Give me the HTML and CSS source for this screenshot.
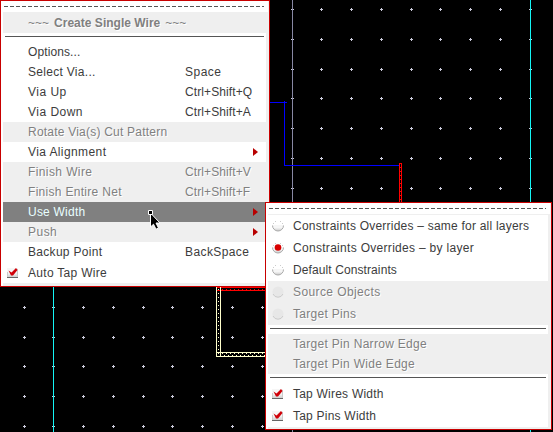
FILE: index.html
```html
<!DOCTYPE html>
<html lang="en">
<head>
<meta charset="utf-8">
<title>Create Single Wire</title>
<link rel="stylesheet" href="styles.css">
</head>
<body>
<svg class="canvas" width="553" height="432" shape-rendering="crispEdges" aria-hidden="true">
  <g id="grid"></g>
  <path d="M292.5 0V432" stroke="#8888a4"/>
  <path d="M530.5 0V432M53.5 287V432" stroke="#14f5f5"/>
  <path d="M270 102.5H287M284.5 101V165.5H399" stroke="#00f" fill="none"/>
  <path d="M399.5 202V163.5H401.5V202" stroke="red" fill="none"/>
  <path d="M400.5 163V202" stroke="red" stroke-dasharray="1 3"/>
  <path d="M217 287.5H265M217 290.5H265" stroke="red"/>
  <path d="M222 289.5H265" stroke="red" stroke-dasharray="1 3"/>
  <path d="M216.5 287V356.5H265M220.5 287V356M216 352.5H265" stroke="#ffc" fill="none"/>
  <path d="M218.5 289V356M222 353.5H265M224 355.5H265" stroke="#ffc" stroke-dasharray="1 3"/>
</svg>

<svg width="0" height="0" class="defs">
  <linearGradient id="shade" x2="0" y2="1"><stop offset=".45" stop-color="#f6f6f6"/><stop offset="1" stop-color="#c8c8c8"/></linearGradient>
  <symbol id="arrow" viewBox="0 0 5 8"><path d="M0 0L5 4L0 8Z" fill="#b80000"/></symbol>
  <symbol id="check" viewBox="0 0 12 12">
    <rect x="0" y="1" width="11" height="10" fill="url(#shade)"/>
    <path d="M0 10.5H11" stroke="#666"/><path d="M10.5 2V10M.5 5V10" stroke="#ccc"/>
    <path d="M1.500 3.500L4.500 5.500L9 1L10.500 3L6 8.500H4Z" fill="#d00008"/>
  </symbol>
  <symbol id="radio" viewBox="0 0 12 12">
    <path d="M.5 5A5.5 6 0 0 0 11.5 5Z" fill="url(#shade)"/>
    <path d="M.5 5.5A5.5 5.5 0 0 0 11.5 5.5" fill="none" stroke="#aaa"/>
    <path d="M3 1.5H4M8 1.5H9M1 3.5H2M10 3.5H11" stroke="#ccc"/>
  </symbol>
  <symbol id="radio-off" viewBox="0 0 12 12"><circle cx="6" cy="6" r="5.5" fill="#e7e7e7"/><path d="M1 8A5.5 5.5 0 0 0 11 8" fill="none" stroke="#ccc"/></symbol>
</svg>

<nav class="menu main">
  <div class="tear"></div>
  <div class="row title off"><span class="tilde">~~~</span><span class="s0">Create Single Wire</span><span class="tilde">~~~</span></div>
  <div class="sep"></div>
  <div class="row"><span class="s1">Options...</span></div>
  <div class="row"><span class="s3">Select Via...</span><span class="key">Space</span></div>
  <div class="row"><span>Via Up</span><span class="key s1">Ctrl+Shift+Q</span></div>
  <div class="row"><span>Via Down</span><span class="key s1">Ctrl+Shift+A</span></div>
  <div class="row off"><span class="s2">Rotate Via(s) Cut Pattern</span></div>
  <div class="row"><span class="s4">Via Alignment</span><svg class="more"><use href="#arrow"/></svg></div>
  <div class="row off"><span class="s4">Finish Wire</span><span class="key s1">Ctrl+Shift+V</span></div>
  <div class="row off"><span class="s3">Finish Entire Net</span><span class="key s1">Ctrl+Shift+F</span></div>
  <div class="row active"><span class="s2">Use Width</span><svg class="more"><use href="#arrow"/></svg></div>
  <div class="row off"><span>Push</span><svg class="more"><use href="#arrow"/></svg></div>
  <div class="row"><span class="s3">Backup Point</span><span class="key s4">BackSpace</span></div>
  <div class="row tall"><svg class="mark"><use href="#check"/></svg><span class="s3">Auto Tap Wire</span></div>
</nav>

<nav class="menu sub">
  <div class="tear"></div>
  <div class="row tall"><svg class="mark"><use href="#radio"/></svg><span class="s2">Constraints Overrides – same for all layers</span></div>
  <div class="row tall"><svg class="mark"><use href="#radio"/><circle cx="6" cy="5.5" r="3.3" fill="#d80000"/></svg><span class="s3">Constraints Overrides – by layer</span></div>
  <div class="row tall"><svg class="mark"><use href="#radio"/></svg><span class="s1">Default Constraints</span></div>
  <div class="row tall off"><svg class="mark"><use href="#radio-off"/></svg><span class="s4">Source Objects</span></div>
  <div class="row tall off"><svg class="mark"><use href="#radio-off"/></svg><span class="s3">Target Pins</span></div>
  <div class="sep"></div>
  <div class="row off"><span class="s3">Target Pin Narrow Edge</span></div>
  <div class="row off"><span class="s3">Target Pin Wide Edge</span></div>
  <div class="sep"></div>
  <div class="row tall"><svg class="mark"><use href="#check"/></svg><span class="s2">Tap Wires Width</span></div>
  <div class="row tall"><svg class="mark"><use href="#check"/></svg><span class="s2">Tap Pins Width</span></div>
</nav>

<svg class="cursor" width="14" height="20" viewBox="0 0 14 20">
  <path d="M2.5 3V17L5.5 14.2L8 19.2L10.5 18L8 13H12Z" fill="#000" stroke="#fff"/>
  <path d="M.5 .5H4.500V4.500H.5Z" fill="#000" stroke="#fff"/>
</svg>
<script src="grid.js"></script>
</body>
</html>
```
FILE: styles.css
```css
body { margin: 0; width: 553px; height: 432px; overflow: hidden; background: #000; position: relative; font: 12px/20px "Liberation Sans", Arial, sans-serif; letter-spacing: .48px; color: #3c3c3c; }
.canvas { display: block; }
.defs { position: absolute; }
.menu { position: absolute; box-sizing: border-box; border: 1px solid #c80000; background: #efefef; padding: 0 3px 2px 2px; white-space: nowrap; box-shadow: inset 2px 0 #fff; }
.main { left: 0; top: 0; width: 270px; height: 287px; }
.sub { left: 265px; top: 202px; width: 287px; height: 228px; }
.tear { height: 11px; margin-right: -2px; background: repeating-linear-gradient(90deg, #555 0 4px, transparent 4px 6px) 1px 5px / calc(100% - 5px) 1px no-repeat, #fff; }
.sub .tear { margin-bottom: 1px; }
.row { display: flex; align-items: center; height: 20px; padding-left: 25px; background: #fff; position: relative; }
.tall { height: 22px; padding-left: 4px; }
.main .tall { height: 21px; }
.mark { width: 12px; height: 12px; flex: none; margin-right: 9px; overflow: visible; }
.off { background: #efefef; color: #808080; text-shadow: 1px 1px #fff; }
.active { background: #808080; color: #e8ffff; }
.title { height: 21px; font-weight: bold; gap: 5px; }
.tilde { letter-spacing: 0; font-weight: normal; }
.key { position: absolute; left: 182px; }
.more { width: 5px; height: 8px; margin-left: auto; margin-right: 8px; }
.sep { height: 9px; background: linear-gradient(#555, #555) 2px 3px / calc(100% - 4px) 1px no-repeat, #fff; }
.cursor { position: absolute; left: 148px; top: 210px; }

/* Tracking steps */
.s0 { letter-spacing: .02px; }
.s1 { letter-spacing: .1px; }
.s2 { letter-spacing: .22px; }
.s3 { letter-spacing: .3px; }
.s4 { letter-spacing: .4px; }
```
FILE: grid.js
```js
// Grid points of the layout canvas.
const xs = [24, 53, 83, 113, 143, 172, 202, 232, 262, 292, 321, 351, 381, 411, 440, 470, 500, 530];
const ys = [9, 39, 69, 98, 128, 158, 188, 218, 247, 277, 307, 337, 366, 396, 426];
let d = "";
for (const x of xs) for (const y of ys) d += `M${x - 1} ${y + .5}h3M${x + .5} ${y - 1}v3`;
document.getElementById("grid").innerHTML = `<path d="${d}" stroke="#ccccdc"/>`;
```
